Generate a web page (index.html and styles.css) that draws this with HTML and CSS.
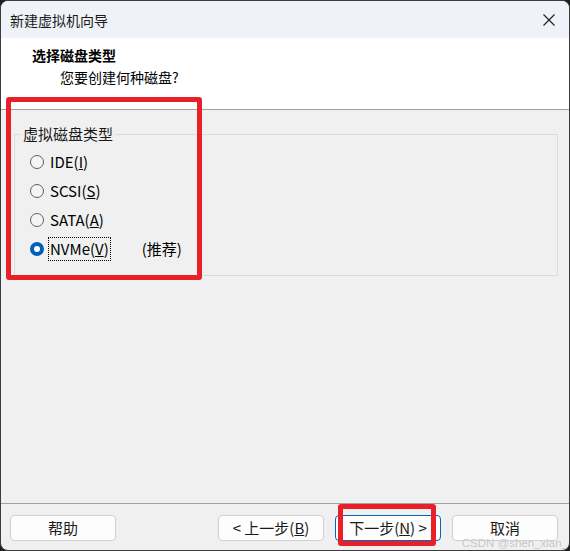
FILE: index.html
```html
<!DOCTYPE html>
<html lang="zh-CN">
<head>
<meta charset="utf-8">
<title>新建虚拟机向导</title>
<link rel="stylesheet" href="styles.css">
</head>
<body>
<div class="window">
  <div class="titlebar">
    <span class="title">新建虚拟机向导</span>
    <svg class="close" width="12" height="12" viewBox="0 0 12 12"><path d="M0.5 0.5 L11.5 11.5 M11.5 0.5 L0.5 11.5" stroke="#1b1b1b" stroke-width="1.1" fill="none"/></svg>
  </div>
  <div class="header">
    <div class="h-title">选择磁盘类型</div>
    <div class="h-sub">您要创建何种磁盘?</div>
  </div>
  <div class="content">
    <fieldset class="group">
      <legend class="legend">虚拟磁盘类型</legend>
      <div class="row"><span class="radio"></span><span class="label">IDE(<u>I</u>)</span></div>
      <div class="row"><span class="radio"></span><span class="label">SCSI(<u>S</u>)</span></div>
      <div class="row"><span class="radio"></span><span class="label">SATA(<u>A</u>)</span></div>
      <div class="row"><span class="radio checked"></span><span class="label focus">NVMe(<u>V</u>)</span><span class="rec">(推荐)</span></div>
    </fieldset>
  </div>
  <div class="footer">
    <button class="btn">帮助</button>
    <div class="spacer"></div>
    <button class="btn">&lt; 上一步(<u>B</u>)</button>
    <button class="btn default">下一步(<u>N</u>) &gt;</button>
    <button class="btn">取消</button>
  </div>
  <div class="mark mark1"></div>
  <div class="mark mark2"></div>
  <div class="watermark">CSDN @shen_xian_</div>
</div>
</body>
</html>
```

FILE: styles.css
```css
html, body {
  margin: 0;
  padding: 0;
  background: #1f1f1f;
}
body {
  width: 570px;
  height: 551px;
  overflow: hidden;
  font-family: "Noto Sans CJK SC", "Noto Sans", sans-serif;
  color: #000;
}
.window {
  position: relative;
  box-sizing: border-box;
  width: 570px;
  height: 551px;
  border: 1px solid #3c3c3c;
  border-radius: 8px;
  overflow: hidden;
  display: flex;
  flex-direction: column;
  background: #f0f0f0;
}
.titlebar {
  height: 37px;
  flex: none;
  background: #eff2f8;
  display: flex;
  align-items: center;
  justify-content: space-between;
  padding: 0 14px 0 9px;
}
.title {
  font-size: 14px;
  line-height: 18px;
  color: #1a1a1a;
  padding-top: 1px;
}
.close {
  display: block;
}
.header {
  flex: none;
  background: #fff;
  border-bottom: 1px solid #a0a0a0;
  box-sizing: border-box;
  height: 72px;
  padding-top: 7px;
}
.h-title {
  font-weight: bold;
  font-size: 14px;
  line-height: 20px;
  padding-left: 31px;
}
.h-sub {
  font-size: 14px;
  line-height: 20px;
  margin-top: 2px;
  padding-left: 59px;
}
.content {
  flex: 1;
  padding: 16px 11px 0 13px;
}
.group {
  margin: 0;
  border: 1px solid #dcdcdc;
  padding: 5px 0 11px 15px;
  height: 150px;
  box-sizing: border-box;
}
.legend {
  font-size: 15px;
  line-height: 16px;
  padding: 0 2px;
  margin-left: -9px;
  color: #1a1a1a;
}
.row {
  height: 29px;
  display: flex;
  align-items: center;
  font-size: 15px;
}
.radio {
  width: 14px;
  height: 14px;
  box-sizing: border-box;
  border: 1px solid #5f5f5f;
  border-radius: 50%;
  background: #f5f5f5;
  flex: none;
}
.radio.checked {
  border: 4px solid #005fb8;
  background: #fff;
}
.label {
  margin-left: 4px;
  padding: 0 1px;
  line-height: 22px;
  border: 1px solid transparent;
}
.label.focus {
  border: 1px dotted #000;
}
.rec {
  margin-left: 31px;
}
.footer {
  flex: none;
  height: 47px;
  box-sizing: border-box;
  border-top: 1px solid #a0a0a0;
  padding: 11px 11px 0 9px;
  display: flex;
  align-items: flex-start;
  gap: 11px;
}
.spacer {
  flex: 1;
}
.btn {
  width: 106px;
  height: 26px;
  box-sizing: border-box;
  background: #fdfdfd;
  border: 1px solid #d0d0d0;
  border-radius: 4px;
  font-family: "Noto Sans CJK SC", "Noto Sans", sans-serif;
  font-size: 15px;
  line-height: 16px;
  color: #1a1a1a;
  padding: 0;
}
.btn.default {
  border-color: #0067c0;
}
.mark {
  position: absolute;
  border: 5px solid #e8202a;
  border-radius: 3px;
  box-sizing: border-box;
}
.mark1 {
  left: 5px;
  top: 96px;
  width: 196px;
  height: 183px;
}
.mark2 {
  left: 337px;
  top: 503px;
  width: 98px;
  height: 42px;
}
.watermark {
  position: absolute;
  right: 1px;
  bottom: 1px;
  font-family: "Liberation Sans", Arial, sans-serif;
  font-size: 11.5px;
  line-height: 11px;
  color: rgba(150, 150, 150, 0.55);
  text-shadow: 0 0 1px rgba(255,255,255,0.8);
}
```
